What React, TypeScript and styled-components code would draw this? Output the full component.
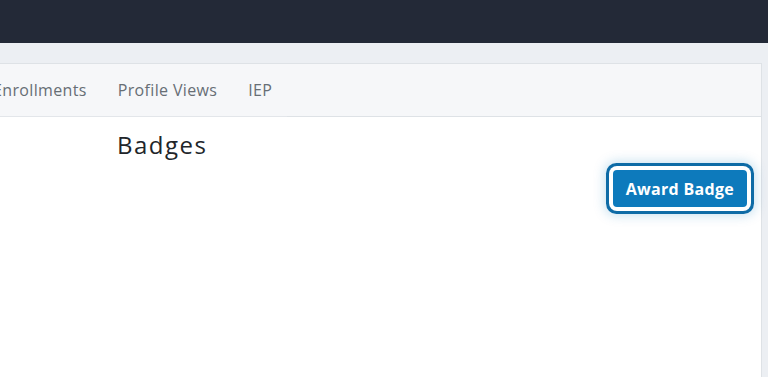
import React from "react";
import styled, { createGlobalStyle } from "styled-components";

const Global = createGlobalStyle`
  html, body { margin: 0; padding: 0; }
  body {
    background: #eceff3;
    font-family: "Open Sans", "Liberation Sans", sans-serif;
    overflow: hidden;
  }
`;

const Page = styled.div`
  width: 768px;
  height: 377px;
  display: flex;
  flex-direction: column;
  overflow: hidden;
`;

const TopBar = styled.header`
  height: 43px;
  flex: none;
  background: #232937;
`;

const Main = styled.main`
  flex: 1;
  padding: 20px 6px 0 0;
  display: flex;
  overflow: hidden;
`;

const Card = styled.section`
  flex: 1;
  margin-left: -40px;
  background: #ffffff;
  border: 1px solid #dee2e6;
  border-bottom: none;
  display: flex;
  flex-direction: column;
`;

const TabBar = styled.nav`
  height: 52px;
  flex: none;
  background: #f6f7f9;
  border-bottom: 1px solid #dee2e6;
  display: flex;
  align-items: stretch;
`;

const Tab = styled.div<{ $lead?: number }>`
  padding: 0 15px 0 ${(p) => p.$lead ?? 16}px;
  display: flex;
  align-items: center;
  color: #676e75;
  font-size: 16px;
  font-weight: 500;
  letter-spacing: 0.35px;
  border-bottom: 1px solid #e3e6ea;
  margin-bottom: -1px;
  white-space: nowrap;
`;

const Content = styled.div`
  display: grid;
  grid-template-columns: 156px 1fr;
  padding: 12px 14px 0 0;
`;

const Heading = styled.h2`
  grid-column: 2;
  margin: 0;
  font-size: 24px;
  font-weight: 400;
  color: #212529;
  line-height: 32px;
  letter-spacing: 1.5px;
`;

const Actions = styled.div`
  grid-column: 1 / span 2;
  display: flex;
  justify-content: flex-end;
  margin-top: 9px;
`;

const AwardButton = styled.button`
  height: 37px;
  padding: 0 13px;
  background: #0d7abc;
  border: none;
  border-radius: 4px;
  color: #ffffff;
  font-family: "Open Sans", "Liberation Sans", sans-serif;
  font-size: 16px;
  font-weight: 700;
  letter-spacing: 0.3px;
  box-shadow: 0 0 0 4px #ffffff, 0 0 0 7px #0d6ba6, 0 0 12px 8px rgba(13, 122, 188, 0.25);
`;

export default function App() {
  return (
    <>
      <Global />
      <Page>
        <TopBar />
        <Main>
          <Card>
            <TabBar>
              <Tab $lead={32}>Enrollments</Tab>
              <Tab>Profile Views</Tab>
              <Tab>IEP</Tab>
            </TabBar>
            <Content>
              <Heading>Badges</Heading>
              <Actions>
                <AwardButton>Award Badge</AwardButton>
              </Actions>
            </Content>
          </Card>
        </Main>
      </Page>
    </>
  );
}
